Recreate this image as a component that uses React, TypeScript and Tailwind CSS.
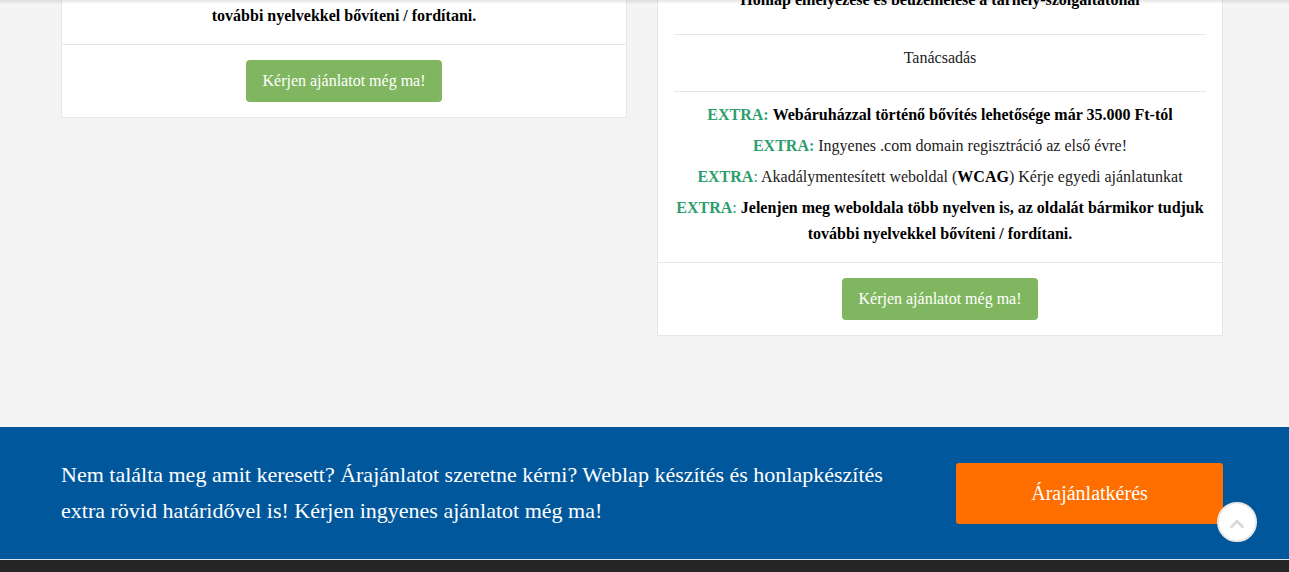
import { ChevronUp } from "lucide-react";

const serif = "font-['Liberation_Serif','Times_New_Roman',serif]";

const Extra = ({
  children,
  boldColon,
}: {
  children: React.ReactNode;
  boldColon?: boolean;
}) => (
  <p className="mb-[5px] last:mb-0 leading-[26px]">
    <span className="text-[#2e9e6e]">
      <b>EXTRA</b>
      {boldColon ? <b>:</b> : ":"}
    </span>{" "}
    {children}
  </p>
);

const OfferButton = () => (
  <div className="border-t border-[#e6e6e6] pt-[15px] pb-[15px] flex justify-center">
    <button className="bg-[#80b660] text-white text-base leading-[22px] px-4 py-[10px] rounded-[4px] whitespace-nowrap">
      Kérjen ajánlatot még ma!
    </button>
  </div>
);

export default function App() {
  return (
    <div className={`${serif} min-h-screen bg-[#f4f4f4] text-[#212121] text-base`}>
      {/* header shadow */}
      <div className="fixed top-0 left-0 right-0 h-[4px] bg-gradient-to-b from-black/10 to-transparent z-10" />

      <section className="overflow-hidden">
        <div className="-mt-[100px] w-[1162px] ml-[61px] pb-[91px] flex items-start gap-[30px]">
          {/* left card */}
          <div className="w-[566px] bg-white border border-[#e6e6e6] text-center">
            <div className="h-[66px]" />
            <div className="px-4 pt-[10px] pb-[15px]">
              <p className="leading-[26px] font-bold text-black">
                <span className="text-[#2e9e6e]">EXTRA:</span> Jelenjen meg weboldala több nyelven
                is, az oldalát bármikor tudjuk további nyelvekkel bővíteni / fordítani.
              </p>
            </div>
            <OfferButton />
          </div>

          {/* right card */}
          <div className="w-[566px] bg-white border border-[#e6e6e6] text-center">
            <div className="h-[76px]" />
            <ul className="px-4">
              <li className="border-b border-[#e6e6e6] pt-[10px] pb-[21px] leading-[26px] font-bold text-black">
                Honlap élhelyezése és beüzemelése a tárhely-szolgáltatónál
              </li>
              <li className="border-b border-[#e6e6e6] pt-[10px] pb-[20px] leading-[26px]">
                Tanácsadás
              </li>
              <li className="pt-[10px] pb-[15px]">
                <Extra boldColon>
                  <b className="text-black">Webáruházzal történő bővítés lehetősége már 35.000 Ft-tól</b>
                </Extra>
                <Extra boldColon>Ingyenes .com domain regisztráció az első évre!</Extra>
                <Extra>
                  Akadálymentesített weboldal (<b className="text-black">WCAG</b>) Kérje egyedi ajánlatunkat
                </Extra>
                <Extra>
                  <b className="text-black">
                    Jelenjen meg weboldala több nyelven is, az oldalát bármikor tudjuk további nyelvekkel
                    bővíteni / fordítani.
                  </b>
                </Extra>
              </li>
            </ul>
            <OfferButton />
          </div>
        </div>
      </section>

      <section className="bg-[#01579b] border-b border-[#dce6ef]">
        <div className="w-[1162px] ml-[61px] py-[30px] flex items-center gap-[30px]">
          <p className="flex-1 text-white text-[22px] leading-[36px]">
            Nem találta meg amit keresett? Árajánlatot szeretne kérni? Weblap készítés és honlapkészítés
            extra rövid határidővel is! Kérjen ingyenes ajánlatot még ma!
          </p>
          <button className="w-[267px] h-[61px] bg-[#ff6f00] text-white text-[20px] rounded-[3px]">
            Árajánlatkérés
          </button>
        </div>
      </section>

      <footer className="bg-[#252525] h-[80px]" />

      <button className="fixed right-[32px] bottom-[30px] w-[40px] h-[40px] rounded-full bg-white border-2 border-[#e8e8e8] flex items-center justify-center z-20">
        <ChevronUp size={22} strokeWidth={3} className="text-[#d8d8d8] mt-[3px]" />
      </button>
    </div>
  );
}
